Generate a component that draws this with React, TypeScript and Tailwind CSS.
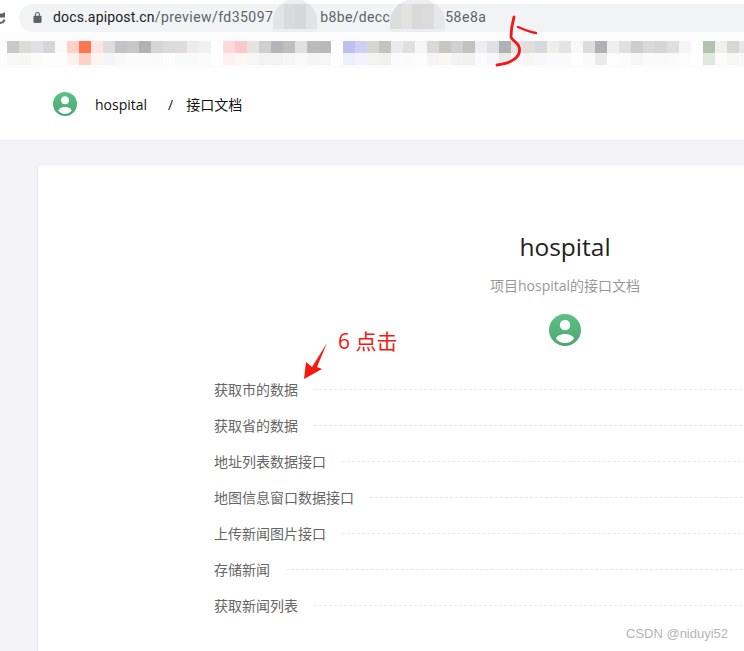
import { useId } from 'react';

const topTiles = [
	'#c9c9c9', '#dedbd7', '#dfe1e4', '#d4d6da', '#fafafc', '#ffd0c6', '#ff7550', '#fbe6e2', '#dfdedb', '#c4c3c8',
	'#c8c6c7', '#b2b0b4', '#d5d4d7', '#dedadb', '#dedce1', '#ececec', '#f0f1f3', '#ffffff', '#fcdadc', '#fcc9cb',
	'#e6e4e1', '#d0cfcd', '#b5b4bb', '#bfbebb', '#dde1e2', '#bbbbbb', '#b9bbb9', '#ffffff', '#c0c0f0', '#cfcff5',
	'#d6d5d1', '#c4c3bd', '#e8ecee', '#e2dfdf', '#f5f6f7', '#dbd8d8', '#c9c5c1', '#cfd0d2', '#c4c0bb', '#eceef3',
	'#dfe0e3', '#b0b1b3', '#e6e3e0', '#e0dfdc', '#d5dadd', '#efeeea', '#e4e4e6', '#f7f8fa', '#dcdde0', '#b0b1b4',
	'#f0eeee', '#e2e0dd', '#cdcdcd', '#d8d9db', '#d4d5d7', '#dfdee1', '#f5f5f5', '#ffffff', '#b0c4ac', '#f0efec',
	'#d8d7d3', '#e8e8e8',
];

const bottomTiles = [
	'#f8f8f8', '#f7f7f6', '#fbfbfa', '#fdfdfc', '#fdfdfe', '#fff1ee', '#ffd2c8', '#fff4f1', '#f3f5f7', '#f9f9fa',
	'#fbfbfb', '#fbfbfb', '#fafaf8', '#fdfdfd', '#f9f9f9', '#f9f9f9', '#fbfbfb', '#ffffff', '#fff0f1', '#fff6f6',
	'#f6f6f5', '#f2f2f2', '#f3f3f3', '#f6f6f6', '#f8f9f8', '#f5f5f5', '#f5f6f5', '#ffffff', '#eeeefd', '#f3f3fe',
	'#f3f3f2', '#f1f1f0', '#fbfbfc', '#fafafa', '#fcfcfc', '#f4f4f4', '#f8f7f3', '#f3f3f3', '#f1f1f0', '#fafbfd',
	'#f7f7f8', '#ebebeb', '#f9f9f8', '#f6f6f5', '#f8f8f8', '#fafafa', '#fafafa', '#ffffff', '#fafafb', '#ebebeb',
	'#fefefe', '#fdfdfd', '#f5f7f6', '#fafafa', '#f9f9f9', '#fafafa', '#fcfcfc', '#ffffff', '#e0e8de', '#fbfbfa',
	'#f6f6f5', '#f9f9f9',
];

const apis = [
	'获取市的数据',
	'获取省的数据',
	'地址列表数据接口',
	'地图信息窗口数据接口',
	'上传新闻图片接口',
	'存储新闻',
	'获取新闻列表',
];

const blobOne = ['#e3e4e6', '#d9dadc', '#d6d7d9', '#e2e3e5'];
const blobTwo = ['#dcdddf', '#e2e2e2', '#d8d9d8', '#dadcdc', '#e6e7e8'];

function Avatar({ className }: { className: string }) {
	const id = useId();
	return (
		<svg viewBox="0 0 32 32" className={className}>
			<defs>
				<linearGradient id={id} x1="0" y1="0" x2="0" y2="1">
					<stop offset="0" stopColor="#5cc184" />
					<stop offset="1" stopColor="#4ea673" />
				</linearGradient>
			</defs>
			<circle cx="16" cy="16" r="16" fill={`url(#${id})`} />
			<circle cx="16" cy="11" r="5.200" fill="#fff" />
			<path d="M7 24.500C8 21.500 12 20 16 20C20 20 24 21.500 25 24.500C23 27.500 19.500 29 16 29C12.500 29 9 27.500 7 24.500Z" fill="#fff" />
		</svg>
	);
}

function Blob({ colors }: { colors: string[] }) {
	return (
		<span className="relative -mt-[5px] flex h-[33px] shrink-0 overflow-hidden rounded-t-[24px] bg-[#eceef0] pt-[5px]">
			{colors.map((c, i) => (
				<span key={i} className="h-[25px] w-[11px]" style={{ backgroundColor: c }} />
			))}
		</span>
	);
}

export default function App() {
	return (
		<div className="relative h-[651px] w-[744px] overflow-hidden bg-[#f4f4f8] font-['Open_Sans','Noto_Sans_CJK_SC',sans-serif]">
			<div className="flex h-[33px] items-center bg-white pt-[2px]">
				<svg viewBox="0 0 6 12" className="h-[12px] w-[6px] shrink-0">
					<path d="M0 1.500H2.500L5 0V5.500H0Z" fill="#5f6368" />
					<path d="M4.500 7.500C4 9.500 2 10.800 0 11" fill="none" stroke="#5f6368" strokeWidth="2" />
				</svg>
				<div className="ml-[13px] flex h-[28px] w-[760px] shrink-0 items-center rounded-full bg-[#f1f3f4] pl-[14px] font-['Roboto','Noto_Sans',sans-serif] text-[14px] text-[#5f6368]">
					<svg viewBox="0 0 12 15" className="h-[13px] w-[9px] shrink-0 fill-[#5f6368]">
						<path d="M10 5h-.7V3.600a3.300 3.300 0 0 0-6.600 0V5H2a1.400 1.400 0 0 0-1.400 1.400v6.900A1.400 1.400 0 0 0 2 14.700h8a1.400 1.400 0 0 0 1.400-1.400V6.400A1.400 1.400 0 0 0 10 5ZM4 3.600a2 2 0 0 1 4 0V5H4Z" />
					</svg>
					<span className="ml-[11px] tracking-[0.15px] text-[#202124]">docs.apipost.cn</span>
					<span className="tracking-[0.45px]">/preview/fd35097</span>
					<Blob colors={blobOne} />
					<span className="ml-[3px] tracking-[0.35px]">b8be/decc</span>
					<Blob colors={blobTwo} />
					<span className="tracking-[0.5px]">58e8a</span>
				</div>
			</div>

			<div className="h-[35px] bg-[#fcfcfc] pt-[8px]">
				<div className="flex pl-[7px]">
					{topTiles.map((c, i) => (
						<span key={i} className="h-[12px] w-[12px] shrink-0" style={{ backgroundColor: c }} />
					))}
				</div>
				<div className="flex pl-[7px]">
					{bottomTiles.map((c, i) => (
						<span key={i} className="h-[12px] w-[12px] shrink-0" style={{ backgroundColor: c }} />
					))}
				</div>
			</div>

			<header className="flex h-[73px] items-center border-b border-[#eeeef2] bg-white pl-[53px] text-[14px] text-[#111]">
				<Avatar className="size-6" />
				<span className="ml-[18px]">hospital</span>
				<span className="ml-[21px]">/</span>
				<span className="ml-[13px]">接口文档</span>
			</header>

			<main className="ml-[37px] mt-[23px] h-[600px] w-[1056px] rounded-t-[4px] border border-[#e9e9ee] bg-white pt-[64px]">
				<div className="flex flex-col items-center">
					<h1 className="text-[24.5px] leading-[36px] text-[#222]">hospital</h1>
					<p className="mt-[11px] text-[14px] leading-[20px] text-[#999]">项目hospital的接口文档</p>
					<Avatar className="mt-[18px] size-8" />
				</div>
				<ul className="mt-[25px] pl-[176px]">
					{apis.map((name) => (
						<li key={name} className="flex h-[36px] items-center">
							<span className="text-[14px] text-[#666]">{name}</span>
							<span className="ml-[16px] flex-1 border-t border-dashed border-[#e8e8e8]" />
						</li>
					))}
				</ul>
			</main>

			<svg viewBox="0 0 744 651" className="pointer-events-none absolute inset-0 h-[651px] w-[744px]">
				<path
					d="M514 17C512 24 511 31 511 37C512 41 518 42 519 47C521 53 517 58 513 60C509 63 503 64 497 65"
					fill="none"
					stroke="#f0161a"
					strokeWidth="2.800"
					strokeLinecap="round"
				/>
				<path d="M518 27C523 29 529 32 536 33" fill="none" stroke="#f0161a" strokeWidth="2.400" strokeLinecap="round" />
				<polygon points="304,379 306,362 312,367 327,343 317,367 322,369" fill="#f5190f" />
			</svg>

			<span className="absolute left-[338px] top-[327px] text-[21px] leading-[28px] text-[#f5190f]">6 点击</span>
			<span className="absolute left-[626px] top-[626px] font-['Liberation_Sans',sans-serif] text-[13px] leading-[16px] text-[#b4b4b4]">
				CSDN @niduyi52
			</span>
		</div>
	);
}
